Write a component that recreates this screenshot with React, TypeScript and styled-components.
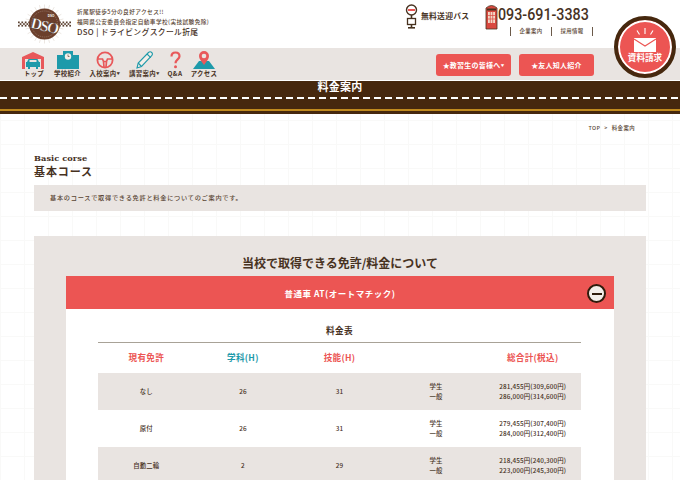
import React from "react";
import styled, { createGlobalStyle } from "styled-components";

const Global = createGlobalStyle`
  html, body { margin: 0; padding: 0; }
  body {
    width: 680px; height: 480px; overflow: hidden; background: #fff;
    font-family: "Noto Sans CJK JP", "Noto Sans", sans-serif; color: #47321f;
  }
  * { box-sizing: border-box; }
`;

const Page = styled.div`
  position: relative; width: 680px; height: 480px; overflow: hidden;
  background-color: #fff;
  background-image: linear-gradient(#f9f9f8 1px, transparent 1px), linear-gradient(90deg, #f9f9f8 1px, transparent 1px);
  background-size: 24px 24px;
`;
const TopBar = styled.header`
  height: 48px; background: #fff; display: flex; align-items: flex-start; padding-left: 18px;
`;
const LogoWrap = styled.div`width: 53px; height: 42px; margin-top: 4px; flex: none;`;
const BrandText = styled.div`margin: 7px 0 0 6px; width: 328px; flex: none; display: flex; flex-direction: column;`;
const Tiny = styled.span`font-size: 5.7px; line-height: 10px; font-weight: 500; letter-spacing: .38px; color: #5a4634; white-space: nowrap;`;
const BrandName = styled.span`font-size: 7.8px; line-height: 10px; font-weight: 500; letter-spacing: .34px; color: #47321f; white-space: nowrap;`;
const BusBox = styled.div`display: flex; align-items: center; gap: 3px; margin-top: 4px; flex: none; width: 80px;`;
const BusIcon = styled.span`flex: none; display: flex;`;
const BusLabel = styled.span`font-size: 7.8px; font-weight: 700; letter-spacing: .25px; color: #47321f; margin-top: -3px; white-space: nowrap;`;
const Contact = styled.div`display: flex; width: 110px; flex: none; margin-top: 4px;`;
const PhoneIcon = styled.span`flex: none; width: 13px; display: flex;`;
const PhoneColumn = styled.div`display: flex; flex-direction: column;`;
const Phone = styled.span`
  font-family: "Roboto", sans-serif; font-size: 16.6px; line-height: 22px; font-weight: 500; color: #47321f; white-space: nowrap;
  transform: scaleX(.86); transform-origin: left center; width: 93px;
`;
const SubLinks = styled.div`display: flex; align-items: center; margin: 1px 0 0 12px; font-size: 5.4px; color: #5a4634; font-weight: 500; letter-spacing: .4px;`;
const SubLink = styled.span`
  border-left: 1px solid #6b5a4a; width: 41px; text-align: center; line-height: 9px; white-space: nowrap;
  &:last-child { border-right: 1px solid #6b5a4a; width: 42px; }
`;

const NavBar = styled.nav`
  height: 33px; background: #e9e4e1; display: flex; align-items: flex-start; padding-left: 20px; border-bottom: 1px solid #fff;
`;
const NavItems = styled.div`display: flex; width: 416px; flex: none; align-items: flex-start;`;
const NavItem = styled.div<{ $w: number }>`
  width: ${p => p.$w}px; display: flex; flex-direction: column; align-items: center; flex: none; height: 32px;
  svg { display: block; margin-top: 3px; height: 18px; }
`;
const NavLabel = styled.span`font-size: 6.4px; line-height: 8px; font-weight: 700; color: #47321f; letter-spacing: .35px; white-space: nowrap; margin-top: 1px;`;
const Caret = styled.small`font-size: 3.5px; vertical-align: 1px;`;
const NavButton = styled.div`
  width: 75px; height: 22px; margin: 6px 0 0 0; background: #ec5553; border-radius: 3px; color: #fff;
  font-size: 7px; font-weight: 700; display: flex; align-items: center; justify-content: center; letter-spacing: .25px; white-space: nowrap;
  & + & { margin-left: 8px; }
`;
const Road = styled.div`
  position: relative; height: 34px; background: #46280e; text-align: center;
  margin-top: -1px; border-top: 1px solid #fff;
`;
const RoadTitle = styled.h1`margin: 0; font-size: 11px; line-height: 11px; font-weight: 700; color: #fff; letter-spacing: .3px;`;
const Dashes = styled.div`
  position: absolute; left: 0; right: 0; top: 16px; height: 1.5px;
  background: repeating-linear-gradient(90deg, #fff 0 7px, transparent 7px 11px);
`;
const Gold = styled.div`position: absolute; left: 0; right: 0; top: 28px; height: 2px; background: #c08a1e;`;

const Badge = styled.div`
  position: absolute; left: 614px; top: 16px; width: 62px; height: 62px; border-radius: 50%;
  background: #ec5553; border: 4px solid #46280e; box-shadow: inset 0 0 0 2px #fff;
  display: flex; flex-direction: column; align-items: center; color: #fff;
  svg { margin-top: 8px; display: block; }
`;
const BadgeText = styled.span`font-size: 8.6px; line-height: 10px; font-weight: 700; white-space: nowrap;`;

const Crumbs = styled.div`
  display: flex; justify-content: flex-end; gap: 4px; padding: 10px 45px 0 0; height: 39px;
  font-size: 5.4px; line-height: 8px; font-weight: 500; color: #5a4634; letter-spacing: .4px;
`;
const Content = styled.main`padding: 0 34px;`;
const HeadEn = styled.div`font-family: "DejaVu Serif", serif; font-weight: 700; font-size: 8.2px; line-height: 10px; color: #47321f; letter-spacing: .08px;`;
const HeadJa = styled.h2`margin: 0; font-size: 11px; line-height: 16px; font-weight: 700; color: #47321f; letter-spacing: .9px;`;
const Intro = styled.p`
  margin: 6px 0 0; height: 26px; background: #e9e4e1; padding-left: 16px; font-size: 6.2px; line-height: 26px; font-weight: 500; letter-spacing: .73px; color: #5a4634;
`;
const Panel = styled.section`margin-top: 25px; background: #e9e4e1; padding: 17px 32px 0; height: 400px;`;
const PanelTitle = styled.h3`margin: 0 0 4px; font-size: 12px; line-height: 19px; font-weight: 700; text-align: center; color: #47321f; letter-spacing: 0;`;
const AccordionHead = styled.div`
  position: relative; height: 33px; background: #ec5553; color: #fff; display: flex; align-items: center; justify-content: center;
  font-size: 8.5px; font-weight: 700; letter-spacing: .5px;
`;
const Toggle = styled.span`
  position: absolute; right: 8px; top: 8px; width: 19px; height: 19px; border-radius: 50%; border: 2px solid #2f1c0c; background: #f3eeea;
  display: flex; align-items: center; justify-content: center;
  &::before { content: ""; width: 10px; height: 2px; background: #2f1c0c; }
`;
const AccordionBody = styled.div`background: #fff; padding: 14px 33px 0 32px; height: 300px;`;
const TableTitle = styled.div`font-size: 8.6px; line-height: 14px; font-weight: 700; text-align: center; letter-spacing: .4px; color: #47321f; padding-bottom: 5px; border-bottom: 1px solid #a8a297;`;
const Row = styled.div<{ $shade?: boolean }>`
  display: grid; grid-template-columns: repeat(5, 1fr); height: 37px; align-items: center; text-align: center;
  background: ${p => (p.$shade ? "#e9e4e1" : "#fff")};
  font-size: 6.4px; line-height: 10px; font-weight: 500; letter-spacing: .1px; color: #47321f;
`;
const HeadRow = styled.div`display: grid; grid-template-columns: repeat(5, 1fr); height: 30px; align-items: center; text-align: center; padding-bottom: 2px;`;
const HeadCell = styled.span<{ $c: string }>`font-size: 8.6px; font-weight: 700; color: ${p => p.$c}; letter-spacing: .3px;`;
const Stack = styled.span`display: flex; flex-direction: column;`;

const Logo = () => (
  <svg viewBox="0 0 53 42" width="53" height="42">
    <g stroke="#d9cfc4" strokeWidth=".5">
      {Array.from({ length: 24 }).map((_, i) => {
        const a = (i * Math.PI) / 12;
        return <line key={i} x1={26.5 + 15 * Math.cos(a)} y1={20 + 15 * Math.sin(a)} x2={26.5 + 19.5 * Math.cos(a)} y2={20 + 19.5 * Math.sin(a)} />;
      })}
    </g>
    {[0, 3.4, 6.8, 10.2].map(x => (
      <g key={x} fill="#5a4030">
        <rect x={x} y="17.5" width="1.7" height="1.7" /><rect x={x + 1.7} y="19.2" width="1.7" height="1.7" /><rect x={x} y="20.9" width="1.7" height="1.7" />
        <rect x={51.3 - x} y="17.5" width="1.7" height="1.7" /><rect x={49.6 - x} y="19.2" width="1.7" height="1.7" /><rect x={51.3 - x} y="20.9" width="1.7" height="1.7" />
      </g>
    ))}
    <circle cx="26.5" cy="20" r="15.5" fill="#6b3f2c" />
    <circle cx="26.5" cy="20" r="13" fill="none" stroke="#cdb9a8" strokeWidth=".4" strokeDasharray="1 1" />
    <text x="33" y="13" textAnchor="middle" fontFamily="Liberation Sans, sans-serif" fontWeight="700" fontSize="3" fill="#fff">DSO</text>
    <g transform="rotate(14 26 23)">
      <text x="26" y="27" textAnchor="middle" fontFamily="Liberation Serif, serif" fontWeight="700" fontSize="15.5" fill="#fff" stroke="#3c2415" strokeWidth=".35" letterSpacing="-1.6">DSO</text>
    </g>
  </svg>
);
const BusStop = () => (
  <svg width="13" height="25" viewBox="0 0 13 25">
    <circle cx="6.5" cy="6" r="5" fill="#fff" stroke="#47321f" strokeWidth="1.4" />
    <rect x="3" y="5" width="7" height="2" fill="#ec5553" />
    <rect x="5.7" y="11" width="1.6" height="4" fill="#47321f" />
    <rect x="2.5" y="14.5" width="8" height="6" fill="#fff" stroke="#47321f" strokeWidth="1.3" />
    <rect x="3" y="23" width="7" height="1.6" fill="#47321f" />
    <rect x="5.7" y="20" width="1.6" height="3" fill="#47321f" />
  </svg>
);
const PhoneBox = () => (
  <svg width="13" height="26" viewBox="0 0 13 26">
    <path d="M1 4 Q6.5 -1 12 4 V25 H1 Z" fill="#d9483f" stroke="#47321f" strokeWidth=".8" />
    <rect x="3" y="8" width="7" height="11" fill="#f3d9c7" />
    <path d="M3 11.5h7M3 15h7M5.3 8v11M7.7 8v11" stroke="#d9483f" strokeWidth=".7" />
    <rect x="2" y="4.5" width="9" height="2" fill="#47321f" />
  </svg>
);
const Garage = () => (
  <svg width="24" height="18" viewBox="1 0 24 18">
    <path d="M1 18V6L12 1l11 5v12h-3V8H4v10z" fill="#e8585a" />
    <path d="M6 11l1.5-3h9L18 11h1v5h-2v2h-2v-2H9v2H7v-2H5v-5z" fill="#1e9aaa" />
    <rect x="8.5" y="9" width="7" height="2" fill="#e9e4e1" />
  </svg>
);
const School = () => (
  <svg width="22" height="18" viewBox="0 0 22 18">
    <path d="M0 4h6V0h10v4h6v14H0z" fill="#1e9aaa" />
    <circle cx="11" cy="5.5" r="3.2" fill="#f4eee8" />
    <path d="M11 3.5v2h1.5" stroke="#47321f" strokeWidth=".6" fill="none" />
  </svg>
);
const Wheel = () => (
  <svg width="18" height="18" viewBox="0 0 18 18" fill="none" stroke="#e8585a">
    <circle cx="9" cy="9" r="7.6" strokeWidth="1.8" />
    <path d="M2 8h4.5l1 2.5h3l1-2.5H16M7.5 10.5 8 16M10.5 10.5 10 16" strokeWidth="1.7" />
  </svg>
);
const Pencil = () => (
  <svg width="18" height="18" viewBox="0 0 18 18" fill="#f4eee8" stroke="#1e9aaa" strokeWidth="1.1">
    <path d="M1 17l1.2-5L12.5 1.5c1-1 2.2-1 3.2 0s1 2.2 0 3.2L5.5 15.5z" />
    <path d="M2.2 12l3.3 3.5M11 3l3.8 3.6" />
  </svg>
);
const Question = () => (
  <svg width="11" height="18" viewBox="0 0 11 18" fill="none">
    <path d="M1.5 5.5C1.5 3 3.2 1.5 5.5 1.5S9.5 3 9.5 5.2c0 3-4 3.4-4 7" stroke="#e8585a" strokeWidth="2.2" />
    <circle cx="5.5" cy="15.8" r="1.5" fill="#e8585a" />
  </svg>
);
const Pin = () => (
  <svg width="22" height="18" viewBox="0 0 22 18">
    <path d="M6 10h10l6 8H0z" fill="#1e9aaa" />
    <path d="M11 14C8 10 6 7.5 6 5a5 5 0 0 1 10 0c0 2.5-2 5-5 9z" fill="#e8585a" />
    <circle cx="11" cy="5" r="2.3" fill="#e9e4e1" />
  </svg>
);
const Mail = () => (
  <svg width="24" height="24" viewBox="0 0 24 24">
    <path d="M12 0v6M4 2.5l2.5 4M20 2.5l-2.5 4" stroke="#fff" strokeWidth="1.1" />
    <rect x="1" y="10" width="22" height="14" fill="#fff" />
    <path d="M1 11l11 7 11-7" fill="none" stroke="#ec5553" strokeWidth="1.1" />
  </svg>
);

const rows = [
  { name: "なし", a: 26, b: 31, s: "281,455円(309,600円)", g: "286,000円(314,600円)", shade: true },
  { name: "原付", a: 26, b: 31, s: "279,455円(307,400円)", g: "284,000円(312,400円)", shade: false },
  { name: "自動二輪", a: 2, b: 29, s: "218,455円(240,300円)", g: "223,000円(245,300円)", shade: true },
];
const nav = [
  { l: "トップ", w: 28, I: Garage },
  { l: "学校紹介", w: 39, I: School },
  { l: "入校案内", w: 36, I: Wheel, m: true },
  { l: "講習案内", w: 43, I: Pencil, m: true },
  { l: "Q&A", w: 18, I: Question },
  { l: "アクセス", w: 40, I: Pin },
];

export default function App() {
  return (
    <Page>
      <Global />
      <TopBar>
        <LogoWrap><Logo /></LogoWrap>
        <BrandText>
          <Tiny>折尾駅徒歩5分の良好アクセス!!</Tiny>
          <Tiny>福岡県公安委員会指定自動車学校(実技試験免除)</Tiny>
          <BrandName>DSO | ドライビングスクール折尾</BrandName>
        </BrandText>
        <BusBox><BusIcon><BusStop /></BusIcon><BusLabel>無料送迎バス</BusLabel></BusBox>
        <Contact>
          <PhoneIcon><PhoneBox /></PhoneIcon>
          <PhoneColumn>
            <Phone>093-691-3383</Phone>
            <SubLinks><SubLink>企業案内</SubLink><SubLink>採用情報</SubLink></SubLinks>
          </PhoneColumn>
        </Contact>
      </TopBar>
      <NavBar>
        <NavItems>
          {nav.map(({ l, w, I, m }) => (
            <NavItem key={l} $w={w}><I /><NavLabel>{l}{m ? <Caret>▼</Caret> : null}</NavLabel></NavItem>
          ))}
        </NavItems>
        <NavButton>★教習生の皆様へ<Caret>▼</Caret></NavButton>
        <NavButton>★友人知人紹介</NavButton>
      </NavBar>
      <Road>
        <RoadTitle>料金案内</RoadTitle>
        <Dashes />
        <Gold />
      </Road>
      <Badge><Mail /><BadgeText>資料請求</BadgeText></Badge>
      <Crumbs><span>TOP</span><span>&gt;</span><span>料金案内</span></Crumbs>
      <Content>
        <HeadEn>Basic corse</HeadEn>
        <HeadJa>基本コース</HeadJa>
        <Intro>基本のコースで取得できる免許と料金についてのご案内です。</Intro>
        <Panel>
          <PanelTitle>当校で取得できる免許/料金について</PanelTitle>
          <AccordionHead>普通車 AT(オートマチック)<Toggle /></AccordionHead>
          <AccordionBody>
            <TableTitle>料金表</TableTitle>
            <HeadRow>
              <HeadCell $c="#ec5553">現有免許</HeadCell>
              <HeadCell $c="#1e9aaa">学科(H)</HeadCell>
              <HeadCell $c="#ec5553">技能(H)</HeadCell>
              <span />
              <HeadCell $c="#ec5553">総合計(税込)</HeadCell>
            </HeadRow>
            {rows.map(r => (
              <Row key={r.name} $shade={r.shade}>
                <span>{r.name}</span><span>{r.a}</span><span>{r.b}</span>
                <Stack><span>学生</span><span>一般</span></Stack>
                <Stack><span>{r.s}</span><span>{r.g}</span></Stack>
              </Row>
            ))}
          </AccordionBody>
        </Panel>
      </Content>
    </Page>
  );
}
